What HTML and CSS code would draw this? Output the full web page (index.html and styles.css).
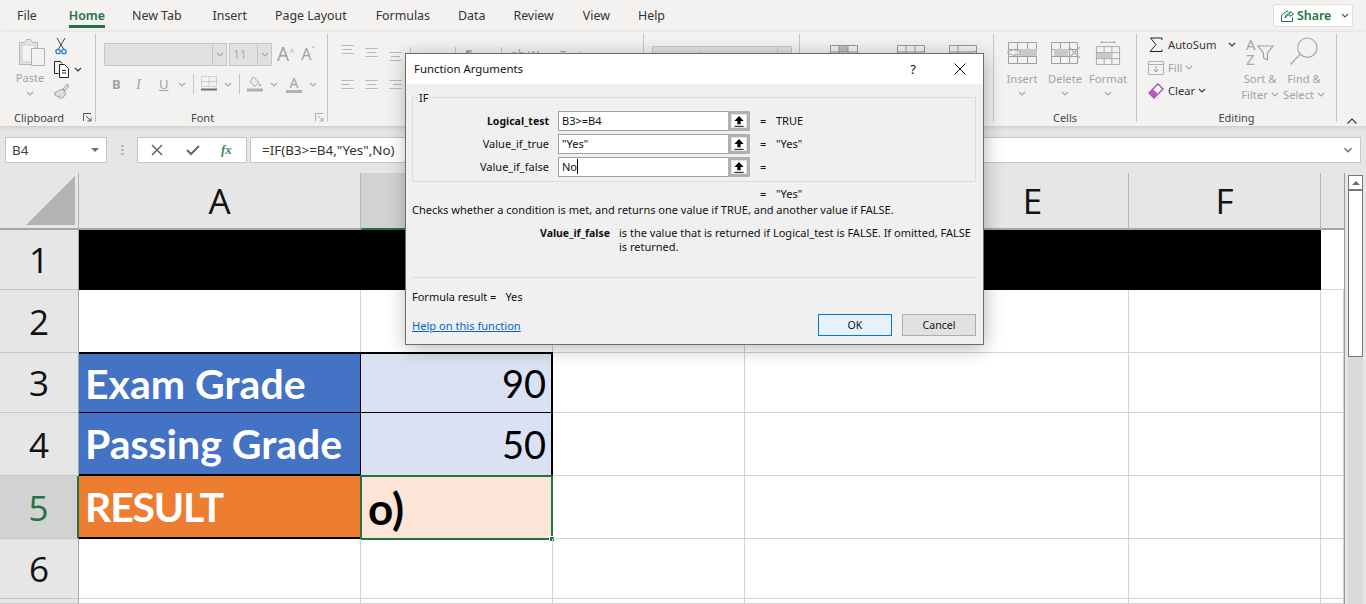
FILE: index.html
```html
<!DOCTYPE html>
<html lang="en">
<head>
<meta charset="utf-8">
<title>Function Arguments</title>
<link rel="stylesheet" href="styles.css">
</head>
<body>
<svg class="sprite" aria-hidden="true">
  <symbol id="chev" viewBox="0 0 8 5"><path d="M1 1l3 3 3-3" fill="none" stroke="currentColor" stroke-width="1.1"/></symbol>
  <symbol id="lines" viewBox="0 0 15 11"><path d="M0 .5h15M2 5.5h11M0 10.5h15" fill="none" stroke="#a6a6a6"/></symbol>
  <symbol id="left" viewBox="0 0 15 11"><path d="M0 .5h15M0 5.5h10M0 10.5h15" fill="none" stroke="#a6a6a6"/></symbol>
  <symbol id="right" viewBox="0 0 15 11"><path d="M0 .5h15M5 5.5h10M0 10.5h15" fill="none" stroke="#a6a6a6"/></symbol>
  <symbol id="upload" viewBox="0 0 13 13"><path d="M6.500 1L11.500 6.500H8.300V10H4.700V6.500H1.500z" fill="#000"/><path d="M1.500 12.300h10" stroke="#000" stroke-width="1"/></symbol>
</svg>

<div class="app">
  <header class="tabs">
    <nav class="tablist">
      <span class="tab t-file">File</span>
      <span class="tab active t-home">Home</span>
      <span class="tab t-new">New Tab</span>
      <span class="tab t-ins">Insert</span>
      <span class="tab t-page">Page Layout</span>
      <span class="tab t-form">Formulas</span>
      <span class="tab t-data">Data</span>
      <span class="tab t-rev">Review</span>
      <span class="tab t-view">View</span>
      <span class="tab t-help">Help</span>
    </nav>
    <button class="share">
      <svg width="14" height="14" viewBox="0 0 14 14"><path d="M1.500 6v6.500h11V8M1.500 6L7 2l1.500 1M5 9c0-3 2.500-4.500 5-4.500V2.500L13.500 5 10 7.500V6C8 6 6 7 5 9z" fill="none" stroke="#217346"/></svg>
      <span>Share</span>
      <svg class="chev share-chev"><use href="#chev"/></svg>
    </button>
  </header>

  <section class="ribbon">
    <div class="group g-clip">
      <div class="gbody clip-body">
        <div class="big paste">
          <svg class="paste-ic" width="28" height="31" viewBox="0 0 28 31"><path d="M1.500 4.500h5l2-3h4l2 3h5v22h-18z" fill="#e3e3e3" stroke="#b4b4b4"/><path d="M4 7h13v17H4z" fill="#f3f2f1" stroke="#cfcfcf"/><path d="M13.500 10.500h13v17h-13z" fill="#f3f2f1" stroke="#b0b0b0"/></svg>
          <span class="dim">Paste</span>
          <svg class="chev dimc"><use href="#chev"/></svg>
        </div>
        <div class="clip-tools">
          <svg class="scissors" width="12" height="18" viewBox="0 0 12 18"><path d="M2 1l6.500 11M10 1L3.500 12" stroke="#444" fill="none"/><circle cx="3" cy="14.500" r="2.200" fill="none" stroke="#2b7cd3" stroke-width="1.300"/><circle cx="9" cy="14.500" r="2.200" fill="none" stroke="#2b7cd3" stroke-width="1.300"/></svg>
          <div class="row-tight">
            <svg width="17" height="18" viewBox="0 0 17 18"><path d="M5.500 13.500h-4v-12h6l1.500 2" fill="none" stroke="#222"/><path d="M6.500 4.500h5l4 4v9h-9z" fill="#fff" stroke="#222"/><path d="M9 10.500h4M9 13h4" stroke="#222"/></svg>
            <svg class="chev dark"><use href="#chev"/></svg>
          </div>
          <svg width="17" height="17" viewBox="0 0 17 17"><path d="M10 6l4-5 2 2-4 5zM9 6l4 4-3 5-1-.5-1 1-2-1 .5-1.500-1.500 1L2 12l1-1-1 .5-1-1.500z" fill="#dcdcdc" stroke="#a3a3a3"/></svg>
        </div>
      </div>
      <div class="glabel"><span></span><span>Clipboard</span><svg class="launch" viewBox="0 0 9 9"><path d="M.5 8V.5H8M3 3l5 5M8 4.500V8H4.500" fill="none" stroke="#555"/></svg></div>
    </div>

    <div class="group g-font">
      <div class="gbody font-body">
        <div class="font-row">
          <div class="combo c-font"><span></span><i><svg class="chev dimc"><use href="#chev"/></svg></i></div>
          <div class="combo c-size"><span>11</span><i><svg class="chev dimc"><use href="#chev"/></svg></i></div>
          <span class="grow dim">A<sup>^</sup></span>
          <span class="shrink dim">A<sup>ˇ</sup></span>
        </div>
        <div class="font-row fmt">
          <b class="dim fb">B</b><i class="dim fi">I</i><u class="dim fu">U</u>
          <svg class="chev dimc"><use href="#chev"/></svg>
          <span class="vsep"></span>
          <svg width="16" height="16" viewBox="0 0 16 16"><path d="M.5.500h15v10H.5zM8 .5v10M.5 5.500h15" fill="none" stroke="#b0b0b0" stroke-dasharray="1 1"/><path d="M0 13.500h16" stroke="#6e6e6e" stroke-width="2"/></svg>
          <svg class="chev dimc"><use href="#chev"/></svg>
          <span class="vsep"></span>
          <svg width="16" height="16" viewBox="0 0 16 16"><path d="M6 1l6 5-4 4.500-5-4.500z" fill="#ececec" stroke="#a8a8a8"/><path d="M13 7l1.500 3h-3z" fill="#a8a8a8"/><path d="M0 14h16" stroke="#b0b0b0" stroke-width="3"/></svg>
          <svg class="chev dimc"><use href="#chev"/></svg>
          <span class="a-color dim">A</span>
          <svg class="chev dimc"><use href="#chev"/></svg>
        </div>
      </div>
      <div class="glabel"><span></span><span>Font</span><svg class="launch faint" viewBox="0 0 9 9"><path d="M.5 8V.5H8M3 3l5 5M8 4.500V8H4.500" fill="none" stroke="#aaa"/></svg></div>
    </div>

    <div class="group g-align">
      <div class="gbody align-body">
        <div class="align-icons">
          <svg class="al"><use href="#lines"/></svg><svg class="al al-mid"><use href="#lines"/></svg><svg class="al al-low"><use href="#lines"/></svg>
          <span class="vsep tall first"></span>
          <span class="dim orient o1">≫a</span>
          <span class="vsep tall"></span>
          <span class="dim orient o2">¶</span>
          <span class="vsep tall"></span>
          <span class="dim wrap"><small>ab</small> Wrap Text</span>
        </div>
        <div class="align-icons lower">
          <svg class="al"><use href="#left"/></svg><svg class="al"><use href="#lines"/></svg><svg class="al"><use href="#right"/></svg>
        </div>
      </div>
    </div>

    <div class="group g-num">
      <div class="gbody num-body"><div class="combo c-num"><span class="dim">General</span><i></i></div></div>
    </div>

    <div class="group g-style">
      <div class="gbody style-body">
        <svg width="28" height="20" viewBox="0 0 28 20"><path d="M9 1h9v6H9z" fill="#bdbdbd"/><path d="M.5.500h27v19H.5zM.5 7h27M.5 13h27M9 .5v19M18 .5v19" fill="none" stroke="#999"/></svg>
        <svg width="28" height="20" viewBox="0 0 28 20"><path d="M.5.500h27v19H.5zM.5 7h27M9 .5v19M18 .5v19" fill="none" stroke="#999"/><path d="M20 12l6-6 2 2-6 6z" fill="#f3f2f1" stroke="#999"/></svg>
        <svg width="28" height="20" viewBox="0 0 28 20"><path d="M.5.500h27v19H.5zM.5 7h27M9 .5v19" fill="none" stroke="#999"/><path d="M20 12l6-6 2 2-6 6z" fill="#f3f2f1" stroke="#999"/></svg>
      </div>
    </div>

    <div class="group g-cells">
      <div class="gbody cells-body">
        <div class="big cellbtn">
          <svg width="32" height="24" viewBox="0 0 32 24"><path d="M2.500 3.500h28v21h-28zM2.500 10.500h28M2.500 17.500h28M11.500 3.500v21M21.500 3.500v21" fill="none" stroke="#a0a0a0" transform="translate(0 -2)"/><path d="M13 8h18v7H13z" fill="#c9c9c9"/><path d="M9 8L1 11.500 9 15v-2h5v-3H9z" fill="#f3f2f1" stroke="#a8a8a8"/></svg>
          <span class="dim">Insert</span><svg class="chev dimc"><use href="#chev"/></svg>
        </div>
        <div class="big cellbtn">
          <svg width="32" height="24" viewBox="0 0 32 24"><path d="M2.500 3.500h26v21h-26zM2.500 10.500h26M2.500 17.500h26M11.500 3.500v21M20.500 3.500v21" fill="none" stroke="#a0a0a0" transform="translate(0 -2)"/><path d="M5 8h14v7H5z" fill="#c9c9c9"/><path d="M20 6l11 11M31 6L20 17" stroke="#b0b0b0" stroke-width="1.400"/></svg>
          <span class="dim">Delete</span><svg class="chev dimc"><use href="#chev"/></svg>
        </div>
        <div class="big cellbtn">
          <svg class="fmt-ic" width="30" height="28" viewBox="0 0 30 28"><path d="M7 1.500h16M7 0v3M23 0v3" stroke="#a0a0a0" fill="none"/><path d="M1.500 6.500h27v21h-27zM1.500 13.500h27M1.500 20.500h27M10.500 6.500v21M19.500 6.500v21" fill="none" stroke="#a0a0a0"/><path d="M11 14h8v6h-8zM2 14h9v6H2z" fill="#c9c9c9"/></svg>
          <span class="dim">Format</span><svg class="chev dimc"><use href="#chev"/></svg>
        </div>
      </div>
      <div class="glabel"><span></span><span>Cells</span><span></span></div>
    </div>

    <div class="group g-edit">
      <div class="gbody edit-body">
        <div class="edit-list">
          <div class="edit-row">
            <svg class="ed-ic" width="16" height="16" viewBox="0 0 16 16"><path d="M14 3V1H2.500L8 7.500 2 14.500h12v-2" fill="none" stroke="#222" stroke-width="1"/></svg>
            <span class="strong">AutoSum</span><svg class="chev dark sum-chev"><use href="#chev"/></svg>
          </div>
          <div class="edit-row">
            <svg class="ed-ic" width="16" height="14" viewBox="0 0 16 14"><path d="M.5.500h15v13H.5zM.5 3.500h15" fill="none" stroke="#b0b0b0"/><path d="M8 5v6M5.500 8.500L8 11l2.500-2.500" fill="none" stroke="#a0a0a0"/></svg>
            <span class="dim">Fill</span><svg class="chev dimc"><use href="#chev"/></svg>
          </div>
          <div class="edit-row">
            <svg class="ed-ic" width="16" height="16" viewBox="0 0 16 16"><path d="M1 10l9-9 5 5-9 9z" fill="#fff" stroke="#a14aa8" stroke-width="1.300"/><path d="M1 10l4-4 5 5-4 4z" fill="#b55ebd"/></svg>
            <span class="strong">Clear</span><svg class="chev dark"><use href="#chev"/></svg>
          </div>
        </div>
        <div class="big sortbtn">
          <svg class="sort-ic" width="30" height="29" viewBox="0 0 30 29"><text class="az" x="1" y="13">A</text><text class="az" x="1" y="28">Z</text><path d="M13 9h15l-5.500 7v7l-4-2v-5z" fill="#f3f2f1" stroke="#a0a0a0" stroke-width="1.200"/></svg>
          <span class="dim">Sort &amp;</span><span class="dim">Filter <svg class="chev dimc inl"><use href="#chev"/></svg></span>
        </div>
        <div class="big findbtn">
          <svg class="sort-ic" width="30" height="29" viewBox="0 0 30 30"><circle cx="18.500" cy="11" r="10" fill="none" stroke="#a8a8a8" stroke-width="1.200"/><path d="M11 18L1 28.500" stroke="#a8a8a8" stroke-width="1.400"/></svg>
          <span class="dim">Find &amp;</span><span class="dim">Select <svg class="chev dimc inl"><use href="#chev"/></svg></span>
        </div>
      </div>
      <div class="glabel"><span></span><span>Editing</span><span></span></div>
    </div>
    <svg class="collapse" viewBox="0 0 10 6"><path d="M.5 5.500L5 1l4.500 4.500" fill="none" stroke="#333" stroke-width="1.100"/></svg>
  </section>

  <section class="fbar">
    <div class="namebox"><span>B4</span><span class="tri"></span></div>
    <div class="grip"></div>
    <div class="fbtns">
      <svg width="12" height="12" viewBox="0 0 12 12"><path d="M1 1l10 10M11 1L1 11" stroke="#666" stroke-width="1.500"/></svg>
      <svg width="14" height="12" viewBox="0 0 14 12"><path d="M1 6l4 4 8-8" fill="none" stroke="#666" stroke-width="2"/></svg>
      <span class="fx">fx</span>
    </div>
    <div class="finput"><span>=IF(B3&gt;=B4,"Yes",No)</span><svg class="chev fchev"><use href="#chev"/></svg></div>
  </section>

  <section class="sheetwrap">
    <div class="sheet">
      <div class="h corner"><span class="tri-corner"></span></div>
      <div class="h">A</div><div class="h h-sel"></div><div class="h"></div><div class="h"></div><div class="h">E</div><div class="h">F</div><div class="h h-g"></div>

      <div class="rh">1</div><div class="c band"></div><div class="c first-g"></div>
      <div class="rh">2</div><div class="c"></div><div class="c"></div><div class="c"></div><div class="c"></div><div class="c"></div><div class="c"></div><div class="c"></div>
      <div class="rh">3</div><div class="c lab blue t-top">Exam Grade</div><div class="c num pale t-top t-right">90</div><div class="c"></div><div class="c"></div><div class="c"></div><div class="c"></div><div class="c"></div>
      <div class="rh">4</div><div class="c lab blue t-bottom">Passing Grade</div><div class="c num pale t-right">50</div><div class="c"></div><div class="c"></div><div class="c"></div><div class="c"></div><div class="c"></div>
      <div class="rh rh-sel">5</div><div class="c lab orange t-bottom result">RESULT</div><div class="c lab peach selected">o)<span class="handle"></span></div><div class="c"></div><div class="c"></div><div class="c"></div><div class="c"></div><div class="c"></div>
      <div class="rh">6</div><div class="c"></div><div class="c"></div><div class="c"></div><div class="c"></div><div class="c"></div><div class="c"></div><div class="c"></div>
      <div class="rh"></div><div class="c"></div><div class="c"></div><div class="c"></div><div class="c"></div><div class="c"></div><div class="c"></div><div class="c"></div>
    </div>
    <div class="vscroll">
      <div class="sb-up"><span></span></div>
      <div class="sb-thumb"></div>
    </div>
  </section>
</div>

<div class="dialog" role="dialog">
  <div class="dtitle">
    <span>Function Arguments</span>
    <div class="dctl">
      <span class="qm">?</span>
      <svg width="12" height="12" viewBox="0 0 12 12"><path d="M.5.500l11 11M11.500.500l-11 11" stroke="#111"/></svg>
    </div>
  </div>
  <div class="dbody">
    <fieldset class="fgroup">
      <legend>IF</legend>
      <div class="arg">
        <label class="bold">Logical_test</label>
        <div class="ref"><span>B3&gt;=B4</span></div>
        <div class="refbtn"><svg width="13" height="13"><use href="#upload"/></svg></div>
        <span class="eq">=</span><span class="val">TRUE</span>
      </div>
      <div class="arg">
        <label>Value_if_true</label>
        <div class="ref"><span>"Yes"</span></div>
        <div class="refbtn"><svg width="13" height="13"><use href="#upload"/></svg></div>
        <span class="eq">=</span><span class="val">"Yes"</span>
      </div>
      <div class="arg">
        <label>Value_if_false</label>
        <div class="ref"><span class="caret">No</span></div>
        <div class="refbtn"><svg width="13" height="13"><use href="#upload"/></svg></div>
        <span class="eq">=</span><span class="val"></span>
      </div>
    </fieldset>
    <div class="resline"><span class="eq">=</span><span class="val">"Yes"</span></div>
    <p class="desc">Checks whether a condition is met, and returns one value if TRUE, and another value if FALSE.</p>
    <div class="param">
      <strong>Value_if_false</strong>
      <p>is the value that is returned if Logical_test is FALSE. If omitted, FALSE is returned.</p>
    </div>
    <hr class="dsep">
    <div class="fres"><span>Formula result =</span><span>Yes</span></div>
    <div class="dfoot">
      <a class="help">Help on this function</a>
      <div class="btns"><button class="ok">OK</button><button class="cancel">Cancel</button></div>
    </div>
  </div>
</div>
</body>
</html>
```

FILE: styles.css
```css
* { box-sizing: border-box; }
html, body { margin: 0; height: 604px; overflow: hidden; }
body { position: relative; width: 1366px; background: #e6e6e6; font-family: "Noto Sans", "Open Sans", sans-serif; color: #222; }
.sprite { display: none; }
.app { display: flex; flex-direction: column; height: 604px; }
.chev { width: 8px; height: 5px; color: #777; flex: none; }
.chev.dark { color: #333; }
.chev.dimc { color: #a6a6a6; }
.chev.inl { vertical-align: 2px; }
.dim { color: #a3a3a3; }

/* tabs */
.tabs { height: 32px; background: #f3f2f1; display: flex; justify-content: space-between; flex: none; }
.tablist { display: flex; padding-left: 17px; }
.tab { font-size: 12.4px; line-height: 32px; height: 28px; color: #333; white-space: nowrap; }
.t-home { margin-left: 32px; }
.t-new { margin-left: 27px; }
.t-ins { margin-left: 31px; }
.t-page { margin-left: 28px; }
.t-form { margin-left: 29px; }
.t-data { margin-left: 28px; }
.t-rev { margin-left: 28px; }
.t-view { margin-left: 29px; }
.t-help { margin-left: 28px; }
.tab.active { color: #217346; font-weight: 600; border-bottom: 3px solid #217346; line-height: 31px; }
.share { margin: 4px 13px 0 0; width: 80px; height: 23px; background: #fff; border: 1px solid #e1dfdd; border-radius: 2px; display: flex; align-items: center; padding: 0 0 0 6px; gap: 3px; color: #217346; font: 600 12.4px "Noto Sans", sans-serif; }
.share-chev { color: #217346; margin-left: 7px; }

/* ribbon */
.ribbon { height: 94px; background: #f3f2f1; display: flex; flex: none; position: relative; box-shadow: 0 1px 5px rgba(0,0,0,.14); padding-top: 2px; }
.group { display: flex; flex-direction: column; height: 88px; border-right: 1px solid #c8c6c4; }
.gbody { flex: 1; display: flex; min-height: 0; }
.glabel { height: 17px; margin-bottom: -4px; display: grid; grid-template-columns: 1fr auto 1fr; align-items: center; font-size: 11px; line-height: 17px; color: #444; }
.launch { width: 9px; height: 9px; justify-self: end; margin-right: 3px; }
.g-clip { width: 96px; }
.g-clip .glabel { grid-template-columns: 14px auto 1fr; }
.g-font { width: 232px; }
.g-font .glabel { grid-template-columns: 95px auto 1fr; }
.g-align { width: 316px; }
.g-num { width: 156px; }
.g-style { width: 194px; }
.g-cells { width: 143px; }
.g-edit { width: 200px; }
.big { display: flex; flex-direction: column; align-items: center; font-size: 11.2px; line-height: 16px; }
.clip-body { padding: 3px 0 0 16px; gap: 9px; }
.paste { width: 28px; }
.paste-ic { margin: 1px 0 0 3px; flex: none; }
.paste span { margin-top: 1px; }
.paste .chev { margin-top: 5px; }
.clip-tools { display: flex; flex-direction: column; gap: 5px; align-items: flex-start; }
.scissors { margin-left: 2px; }
.row-tight { display: flex; align-items: center; gap: 4px; }

.font-body { flex-direction: column; padding: 8px 0 0 8px; }
.font-row { display: flex; align-items: center; height: 24px; }
.combo { height: 23px; background: #e1e1e1; border: 1px solid #c6c6c6; display: flex; font-size: 12px; color: #b0b0b0; }
.combo span { flex: 1; padding: 2px 3px; line-height: 17px; }
.combo i { width: 14px; border-left: 1px solid #c6c6c6; display: flex; align-items: center; justify-content: center; }
.c-font { width: 123px; }
.c-size { width: 43px; margin-left: 2px; }
.grow, .shrink { font-size: 19px; line-height: 23px; }
.shrink { font-size: 16px; }
.grow sup, .shrink sup { font-size: 9px; vertical-align: 6px; line-height: 0; }
.grow { margin-left: 5px; }
.shrink { margin-left: 7px; }
.fmt { margin-top: 8px; padding-left: 8px; height: 20px; font-size: 13px; }
.fb { width: 24px; font-weight: 700; }
.fi { width: 23px; font-family: "Liberation Serif", serif; font-size: 15px; }
.fu { width: 12px; }
.fmt .vsep { margin: 0 7px; }
.fmt > svg[width] { flex: none; }
.fmt > svg.chev { margin-left: 7px; }
.vsep { display: block; width: 1px; height: 20px; background: #c8c6c4; flex: none; }
.a-color { border-bottom: 3px solid #b0b0b0; font-size: 14px; line-height: 15px; width: 16px; text-align: center; margin-left: 8px; }

.align-body { flex-direction: column; padding: 11px 0 0 12px; }
.align-icons { display: flex; align-items: flex-start; gap: 9px; height: 20px; }
.al { width: 15px; height: 9px; flex: none; }
.al-mid { margin-top: 3px; }
.al-low { margin-top: 7px; }
.align-icons .vsep.tall { height: 24px; margin-top: 2px; }
.align-icons .vsep.first { margin-left: -2px; }
.orient { font-size: 12px; line-height: 11px; margin-top: 5px; }
.o1 { width: 26px; }
.o2 { width: 27px; }
.wrap { font-size: 11.5px; line-height: 14px; white-space: nowrap; margin-top: 3px; }
.wrap small { font-size: 12px; }
.lower { margin-top: 15px; }

.num-body { padding: 12px 0 0 8px; }
.c-num { width: 140px; }

.style-body { padding: 11px 0 0 30px; gap: 39px; }
.style-body svg + svg + svg { margin-left: -15px; }

.cells-body { padding: 7px 0 0 12px; gap: 11px; }
.cellbtn { width: 32px; }
.cellbtn > svg:first-child { height: 24px; flex: none; }
.cellbtn span { margin-top: 6px; }
.cellbtn .chev { margin-top: 4px; }
.edit-body { padding: 3px 0 0 11px; }
.edit-list { display: flex; flex-direction: column; width: 91px; margin-top: -4px; }
.edit-row { display: flex; align-items: center; height: 23px; font-size: 11.2px; gap: 3px; }
.ed-ic { width: 16px; margin-right: 1px; flex: none; }
.strong { color: #333; }
.sum-chev { margin-left: 9px; }
.sortbtn { width: 42px; }
.findbtn { width: 46px; }
.sort-ic { margin-bottom: 5px; overflow: visible; flex: none; }
.az { font-size: 15px; fill: #a6a6a6; font-family: "Noto Sans", sans-serif; }
.collapse { position: absolute; right: 9px; top: 86px; width: 10px; height: 6px; }

/* formula bar */
.fbar { height: 47px; flex: none; display: flex; padding: 11px 5px 10px; align-items: stretch; }
.namebox { width: 102px; background: #fff; border: 1px solid #c6c6c6; display: flex; justify-content: space-between; align-items: center; padding: 0 7px 0 6px; font-size: 13.4px; color: #444; }
.tri { border: 4px solid transparent; border-top: 4px solid #6e6e6e; border-bottom: 0; width: 0; }
.grip { width: 3px; margin: 8px 13px 8px 14px; background: repeating-linear-gradient(#bbb 0 2px, transparent 2px 4px); }
.fbtns { width: 110px; background: #fff; border: 1px solid #c6c6c6; display: flex; align-items: center; padding-left: 13px; gap: 23px; }
.fx { font: italic 700 13px "Liberation Serif", serif; color: #3d8a5f; margin-left: -2px; }
.finput { flex: 1; margin-left: 3px; background: #fff; border: 1px solid #c6c6c6; display: flex; justify-content: space-between; align-items: center; padding: 0 7px 0 11px; font-size: 13.4px; color: #333; }
.fchev { width: 10px; height: 6px; color: #6e6e6e; }

/* sheet */
.sheetwrap { flex: 1; display: flex; min-height: 0; background: #fff; }
.sheet { width: 1344px; display: grid; grid-template-columns: 79px 282px repeat(5, 192px) 23px; grid-template-rows: 57px 60px 63px 60px 63px 63px 60px 5px; background: #fff; overflow: hidden; }
.h { background: #e6e6e6; border-right: 1px solid #b4b4b4; border-bottom: 2px solid #a6a6a6; display: flex; align-items: center; justify-content: center; font: 400 35px "Open Sans", sans-serif; color: #111; }
.corner { align-items: flex-end; justify-content: flex-end; padding: 0 3px 3px 0; }
.tri-corner { width: 49px; height: 49px; background: #b4b4b4; clip-path: polygon(100% 0, 100% 100%, 0 100%); }
.h-sel { background: #d2d2d2; border-bottom-color: #217346; }
.h-g { border-right: 0; }
.rh { background: #e6e6e6; border-right: 1px solid #a6a6a6; border-bottom: 1px solid #c6c6c6; display: flex; align-items: center; justify-content: center; font: 400 35px "Open Sans", sans-serif; color: #111; }
.rh-sel { background: #d2d2d2; color: #217346; border-right: 2px solid #217346; }
.c { border-right: 1px solid #d4d4d4; border-bottom: 1px solid #d4d4d4; min-width: 0; display: flex; align-items: center; position: relative; font: 400 38px "Lato", "Open Sans", sans-serif; color: #000; white-space: nowrap; }
.band { grid-column: span 6; background: #000; border: 0; }
.first-g { border-right: 0; }
.c:nth-child(8n) { border-right: 0; }
.lab { font-weight: 700; font-size: 41px; padding-left: 6px; }
.num { justify-content: flex-end; padding-right: 5px; }
.blue { background: #4472c4; color: #fff; border-right: 1px solid #000; border-bottom: 1px solid #000; }
.orange { background: #ed7d31; color: #fff; border-right: 0; }
.result { letter-spacing: -1.2px; }
.pale { background: #d9e1f2; border-bottom: 1px solid #000; }
.peach { background: #fce4d6; color: #000; }
.t-top { border-top: 2px solid #000; margin-top: -1px; }
.t-right { border-right: 2px solid #000; }
.t-bottom { border-bottom: 2px solid #000; }
.selected { border: 2px solid #217346; margin: -1px 0 -1px -1px; padding-left: 6px; font-size: 44px; }
.handle { position: absolute; right: -4px; bottom: -4px; width: 6px; height: 6px; background: #217346; border: 1px solid #fff; }

.vscroll { flex: 1; background: #e6e6e6; border-left: 1px solid #9a9a9a; padding: 2px 3px 0; display: flex; flex-direction: column; position: relative; }
.vscroll::before { content: ""; position: absolute; left: 3px; right: 3px; top: 2px; bottom: 0; background: #dadada; }
.sb-up { position: relative; height: 15px; background: #fff; border: 1px solid #777; display: flex; align-items: center; justify-content: center; }
.sb-up span { border: 4px solid transparent; border-bottom: 4px solid #6e6e6e; border-top: 0; }
.sb-thumb { position: relative; height: 167px; background: #fff; border: 1px solid #777; }

/* dialog */
.dialog { position: absolute; left: 405px; top: 53px; width: 579px; height: 292px; background: #f0f0f0; border: 1px solid #6d6d6d; box-shadow: 1px 3px 18px rgba(0,0,0,.28); font-size: 11px; color: #111; display: flex; flex-direction: column; }
.dtitle { height: 30px; background: #fff; flex: none; display: flex; justify-content: space-between; align-items: center; padding: 0 0 2px 8px; font-size: 11.4px; }
.dctl { display: flex; align-items: center; gap: 38px; padding: 2px 17px 0 0; }
.qm { font-size: 13px; }
.dbody { flex: 1; padding: 7px 7px 0 6px; display: flex; flex-direction: column; }
.fgroup { margin: 0; padding: 7px 0 0; height: 91px; flex: none; border: 1px solid #dcdcdc; min-width: 0; }
.fgroup legend { padding: 0 2px; margin-left: 4px; line-height: 13px; font-size: 11px; }
.arg { display: flex; align-items: flex-start; height: 23px; line-height: 20px; }
.arg label { width: 136px; text-align: right; margin-right: 9px; }
.bold, .param strong { font-weight: 700; font-size: 10.5px; }
.ref { width: 170px; height: 20px; background: #fff; border: 1px solid #a0a0a0; border-right: 0; padding-left: 3px; line-height: 18px; }
.caret { border-right: 1px solid #000; }
.refbtn { width: 22px; height: 20px; background: #fff; border: 3px solid #b0b0b0; box-shadow: inset 0 0 0 1px #e4e4e4; display: flex; align-items: center; justify-content: center; }
.refbtn svg { width: 12px; height: 12px; }
.eq { width: 26px; padding-left: 10px; flex: none; }
.val { white-space: pre; }
.resline { display: flex; padding-left: 338px; height: 13px; margin-top: 5px; line-height: 13px; }
.desc { margin: 3px 0 0; line-height: 14px; white-space: nowrap; }
.param { display: flex; margin-top: 9px; line-height: 14px; }
.param strong { text-align: right; margin: 0 9px 0 -6px; flex: none; width: 204px; }
.param p { margin: 0; width: 352px; }
.dsep { border: 0; border-top: 1px solid #dcdcdc; margin: 23px 0 0; width: 564px; flex: none; }
.fres { display: flex; margin-top: 12px; line-height: 14px; gap: 9px; }
.dfoot { display: flex; justify-content: space-between; margin-top: 10px; }
.help { color: #0066cc; text-decoration: underline; line-height: 14px; margin-top: 5px; font-size: 11.1px; }
.btns { display: flex; gap: 10px; }
.btns button { width: 74px; height: 22px; padding: 0; font: 10.6px "Noto Sans", sans-serif; color: #111; }
.ok { background: #e5f1fb; border: 1px solid #0078d7; }
.cancel { background: #e1e1e1; border: 1px solid #adadad; }
```
